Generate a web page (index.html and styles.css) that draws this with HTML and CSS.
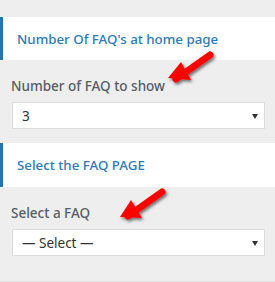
FILE: index.html
```html
<!DOCTYPE html>
<html lang="en">
<head>
    <meta charset="UTF-8">
    <meta name="viewport" content="width=device-width, initial-scale=1.0">
    <title>FAQ Settings</title>
    <link rel="stylesheet" href="styles.css">
</head>
<body>
    <div class="panel">
        <h3 class="section-title">Number Of FAQ's at home page</h3>
        <div class="control">
            <label class="control-label">Number of FAQ to show</label>
            <div class="select">
                <span>3</span>
                <svg class="caret" width="6" height="5" viewBox="0 0 6 5"><path d="M0 0h6L3 5z" fill="#333"/></svg>
            </div>
        </div>
        <h3 class="section-title second">Select the FAQ PAGE</h3>
        <div class="control">
            <label class="control-label">Select a FAQ</label>
            <div class="select">
                <span>&mdash; Select &mdash;</span>
                <svg class="caret" width="6" height="5" viewBox="0 0 6 5"><path d="M0 0h6L3 5z" fill="#333"/></svg>
            </div>
        </div>

        <!-- annotation arrows -->
        <svg class="arrow arrow-one" width="60" height="45" viewBox="0 0 60 45">
            <g filter="url(#shadow)">
                <path d="M50 10 L16 34" stroke="#f00" stroke-width="7" stroke-linecap="round"/>
                <path d="M8 33 L21 17 L31 35 Z" fill="#f00"/>
            </g>
            <defs>
                <filter id="shadow" x="-20%" y="-20%" width="150%" height="150%">
                    <feDropShadow dx="1.5" dy="2" stdDeviation="1.5" flood-color="#000" flood-opacity="0.55"/>
                </filter>
            </defs>
        </svg>
        <svg class="arrow arrow-two" width="60" height="45" viewBox="0 0 60 45">
            <g filter="url(#shadow)">
                <path d="M50 10 L16 34" stroke="#f00" stroke-width="7" stroke-linecap="round"/>
                <path d="M8 35 L19 18 L30 36 Z" fill="#f00"/>
            </g>
        </svg>
    </div>
</body>
</html>
```

FILE: styles.css
```css
body {
    margin: 0;
    background-color: #eee;
    font-family: "Noto Sans", "Open Sans", sans-serif;
}
.panel {
    position: relative;
    padding-top: 17px;
    height: 264px;
    border-bottom: 1px solid #ddd;
}
.section-title {
    margin: 0;
    height: 43px;
    display: flex;
    align-items: center;
    padding-left: 14px;
    background-color: #fff;
    border-left: 3px solid #2a74ad;
    color: #2e7ab6;
    font-size: 13.3px;
    font-weight: 500;
}
.section-title.second {
    height: 44px;
}
.control {
    padding: 17px 10px 14px 12px;
}
.control-label {
    display: block;
    height: 18px;
    line-height: 18px;
    color: #555d66;
    font-size: 13.5px;
    font-weight: 500;
    margin-left: -1px;
    margin-bottom: 7px;
}
.select {
    box-sizing: border-box;
    height: 27px;
    display: flex;
    align-items: center;
    justify-content: space-between;
    padding: 0 6px 0 9px;
    background-color: #fff;
    border: 1px solid #ddd;
    color: #333;
    font-size: 13.5px;
}
.caret {
    margin-top: 1px;
}
.arrow {
    position: absolute;
}
.arrow-one {
    left: 160px;
    top: 45px;
}
.arrow-two {
    left: 112px;
    top: 182px;
}
```
